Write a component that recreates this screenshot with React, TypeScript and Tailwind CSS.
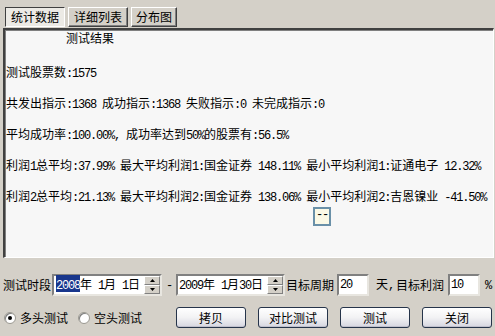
import React from "react";

const cjk = "font-['Noto_Sans_CJK_SC','Noto_Sans',sans-serif]";

function T({ s }: { s: string }) {
  const parts = s.match(/[\x20-\x7e]+|[^\x20-\x7e]+/g) || [];
  return (
    <>
      {parts.map((p, i) =>
        /^[\x20-\x7e]+$/.test(p) ? (
          <span key={i} className="font-['Liberation_Mono',monospace] tracking-[-1.2px] whitespace-pre">
            {p}
          </span>
        ) : (
          <span key={i}>{p}</span>
        )
      )}
    </>
  );
}

function Spin() {
  return (
    <div className="flex flex-col w-[16px] h-[18px]">
      {[0, 1].map((k) => (
        <div
          key={k}
          className="flex-1 flex items-center justify-center bg-[#d4d0c8] border-t border-l border-t-white border-l-white border-b border-r border-b-[#808080] border-r-[#808080]"
        >
          <svg width="5" height="3" viewBox="0 0 5 3">
            {k === 0 ? <path d="M2.5 0 L5 3 L0 3 Z" fill="#000" /> : <path d="M0 0 L5 0 L2.5 3 Z" fill="#000" />}
          </svg>
        </div>
      ))}
    </div>
  );
}

function Sunken({ className, children }: { className: string; children?: React.ReactNode }) {
  return (
    <div className={"flex items-center bg-white border-2 border-t-[#808080] border-l-[#808080] border-b-[#e8e6e0] border-r-[#e8e6e0] h-[22px] " + className}>
      {children}
    </div>
  );
}

function Btn({ label }: { label: string }) {
  return (
    <div className="w-[70px] h-[21px] rounded-[3px] border border-[#26344a] bg-gradient-to-b from-white via-[#f2f2f4] to-[#d6d6e0] flex items-center justify-center text-[12px] shadow-[inset_0_-1px_0_#c0c0cc]">
      {label}
    </div>
  );
}

function Radio({ checked, label }: { checked?: boolean; label: string }) {
  return (
    <div className="flex items-center">
      <div className="w-[12px] h-[12px] rounded-full bg-white border border-[#9a9890] flex items-center justify-center shadow-[inset_1px_1px_0_#808080]">
        {checked && <div className="w-[4px] h-[4px] rounded-full bg-black" />}
      </div>
      <span className="ml-[4px] text-[12px] leading-[14px]">{label}</span>
    </div>
  );
}

export default function App() {
  const lines = [
    "测试股票数:1575",
    "共发出指示:1368 成功指示:1368 失败指示:0 未完成指示:0",
    "平均成功率:100.00%, 成功率达到50%的股票有:56.5%",
    "利润1总平均:37.99% 最大平均利润1:国金证券 148.11% 最小平均利润1:证通电子 12.32%",
    "利润2总平均:21.13% 最大平均利润2:国金证券 138.06% 最小平均利润2:吉恩镍业 -41.50%",
  ];
  return (
    <div className={"w-[495px] h-[336px] bg-[#d4d0c8] text-black relative overflow-hidden " + cjk}>
      {/* tabs */}
      <div className="flex pl-[5px] pt-[7px] h-[27px] text-[12px]">
        <div className="w-[60px] h-[20px] flex items-center justify-center bg-[#eceae5] border border-t-[#404040] border-l-[#404040] border-b-white border-r-white">
          统计数据
        </div>
        <div className="ml-[3px] w-[60px] h-[20px] flex items-center justify-center border border-t-white border-l-white border-b-[#404040] border-r-[#404040] shadow-[inset_-1px_-1px_0_#808080]">
          详细列表
        </div>
        <div className="ml-[3px] w-[46px] h-[20px] flex items-center justify-center border border-t-white border-l-white border-b-[#404040] border-r-[#404040] shadow-[inset_-1px_-1px_0_#808080]">
          分布图
        </div>
      </div>

      {/* text area */}
      <div className="relative mt-[1px] ml-[3px] w-[491px] h-[230px] bg-[#f7f7f7] border-t-2 border-l-2 border-t-[#404040] border-l-[#404040] border-b border-r border-b-white border-r-white shadow-[inset_1px_1px_0_#808080] text-[12px] leading-[16px]">
        <div className="flex flex-col pl-[1px]">
          <div className="h-[16px] pl-[60px]">测试结果</div>
          <div className="flex flex-col gap-[15px] mt-[18px]">
            {lines.map((l, i) => (
              <div key={i} className="h-[16px] whitespace-pre">
                <T s={l} />
              </div>
            ))}
          </div>
        </div>
        <div className="absolute left-[308px] top-[177px] w-[18px] h-[19px] border-2 border-[#6a90a8] bg-[#fbf9e6] flex items-start justify-center text-[12px] leading-[12px]">
          <span className="font-['Liberation_Mono',monospace] tracking-[-1.2px]">--</span>
        </div>
      </div>

      {/* row 1 */}
      <div className="flex items-center pl-[3px] mt-[16px] h-[22px] text-[12px]">
        <span className="w-[48px]">测试时段</span>
        <Sunken className="ml-[1px] w-[110px] justify-between pl-[2px]">
          <span className="leading-[16px] whitespace-pre">
            <span className="bg-[#18368c] text-white">
              <T s="2008" />
            </span>
            <T s="年 1月 1日" />
          </span>
          <Spin />
        </Sunken>
        <span className="w-[14px] text-center">
          <T s="-" />
        </span>
        <Sunken className="w-[109px] justify-between pl-[1px]">
          <span className="leading-[16px] whitespace-pre">
            <T s="2009年 1月30日" />
          </span>
          <Spin />
        </Sunken>
        <span className="ml-[1px] w-[48px]">目标周期</span>
        <Sunken className="ml-[3px] w-[32px] pl-[1px]">
          <T s="20" />
        </Sunken>
        <span className="ml-[7px]">
          天<T s="," />
        </span>
        <span className="ml-[2px]">目标利润</span>
        <Sunken className="ml-[4px] w-[32px] pl-[1px]">
          <T s="10" />
        </Sunken>
        <span className="ml-[5px]">
          <T s="%" />
        </span>
      </div>

      {/* row 2 */}
      <div className="flex items-center mt-[11px] h-[21px]">
        <div className="pl-[4px] flex items-center">
          <Radio checked label="多头测试" />
          <div className="ml-[10px]">
            <Radio label="空头测试" />
          </div>
        </div>
        <div className="ml-[34px] flex gap-[12px]">
          <Btn label="拷贝" />
          <Btn label="对比测试" />
          <Btn label="测试" />
          <Btn label="关闭" />
        </div>
      </div>
    </div>
  );
}
